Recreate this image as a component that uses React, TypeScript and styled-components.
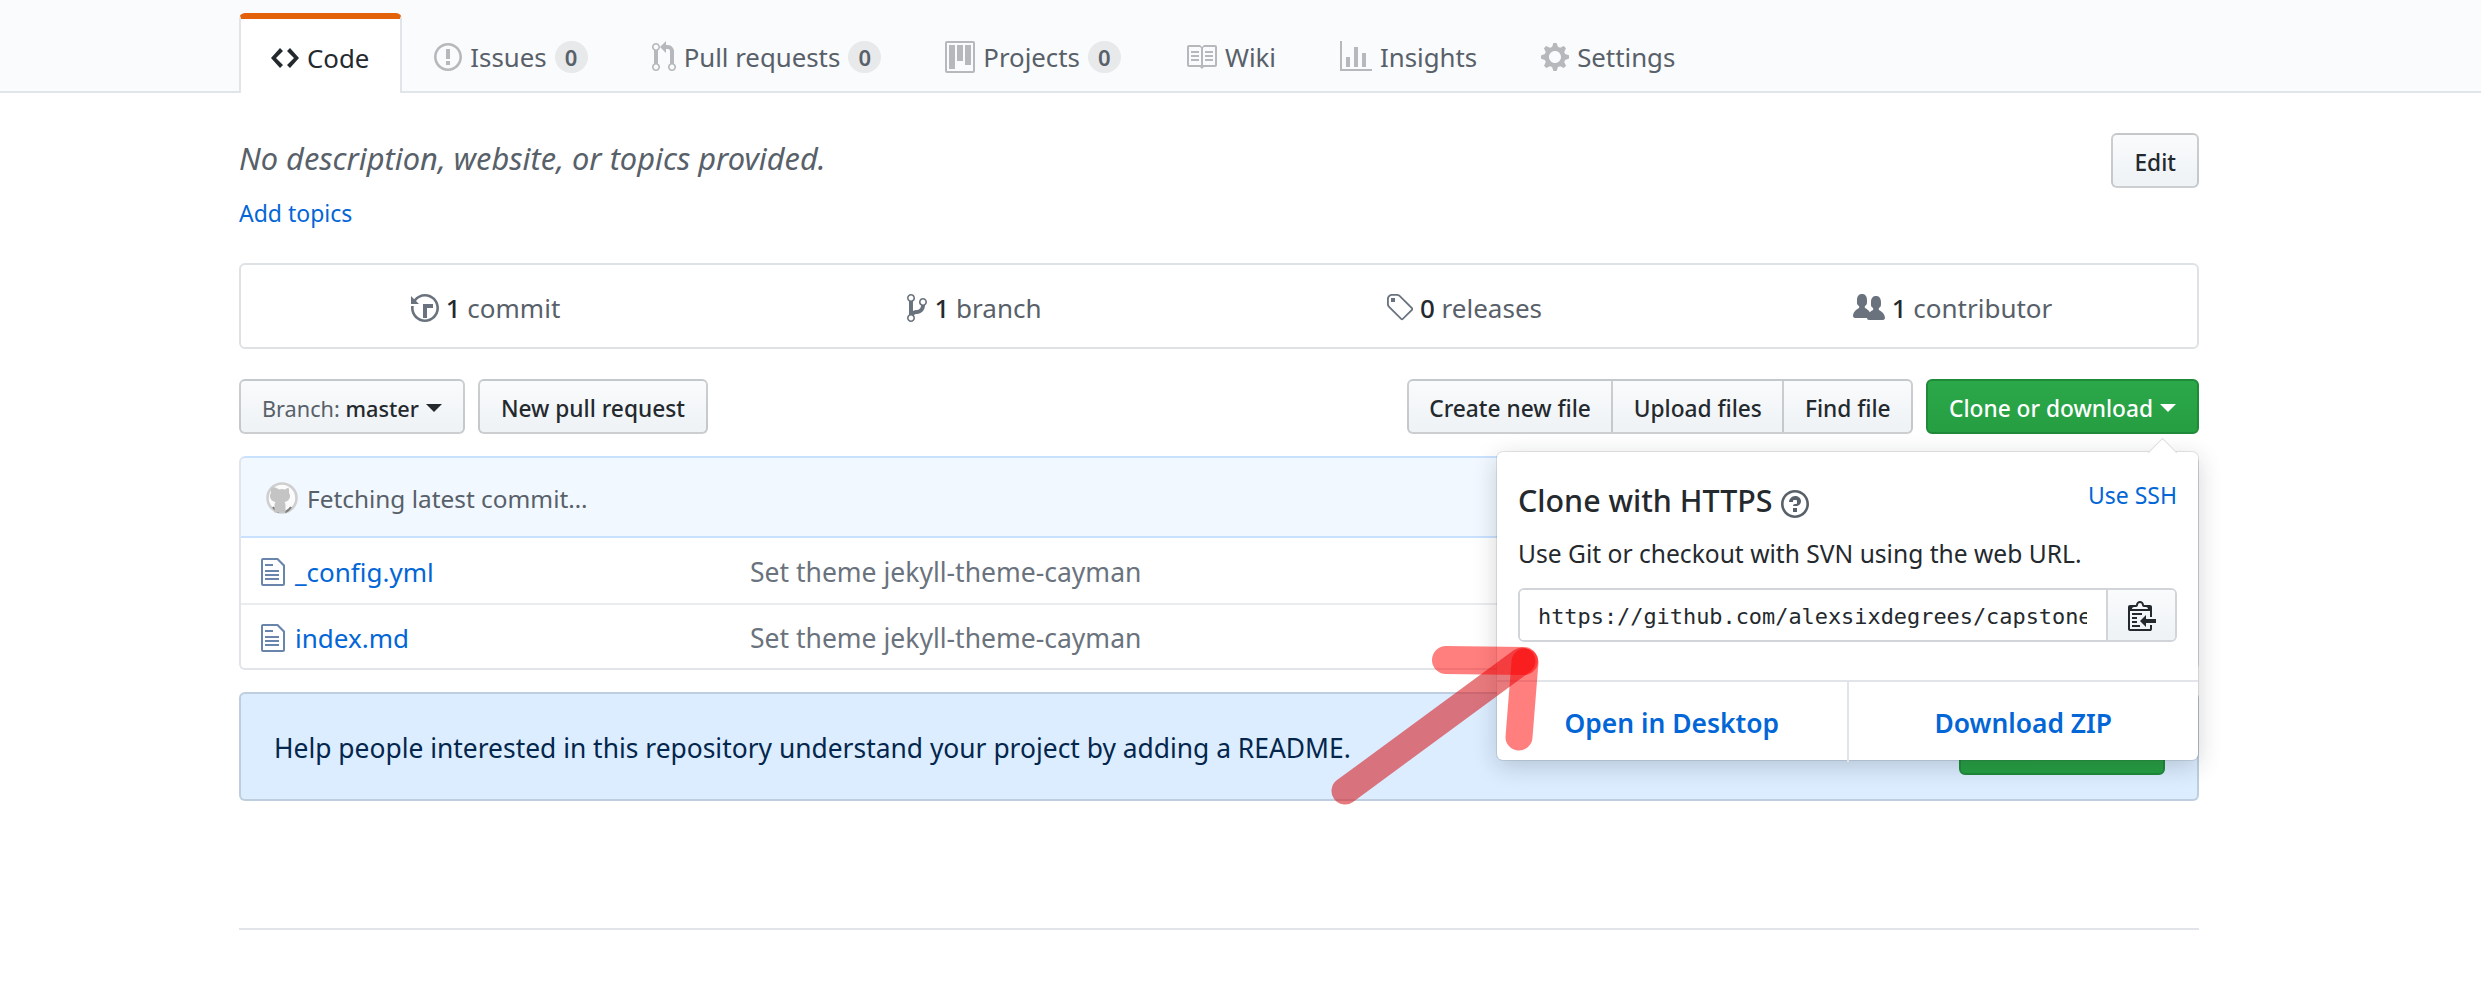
import React from "react";
import styled, { createGlobalStyle } from "styled-components";

const GlobalStyle = createGlobalStyle`
  html, body { margin: 0; padding: 0; background: #fff; }
  body { font-family: "Noto Sans", "Open Sans", sans-serif; color: #24292e; }
  * { box-sizing: border-box; }
`;

const paths = {
  code: "M9.5 3L8 4.5 11.5 8 8 11.5 9.5 13 14 8 9.5 3zm-5 0L0 8l4.5 5L6 11.5 2.5 8 6 4.5 4.5 3z",
  issue: "M7 2.3c3.14 0 5.7 2.56 5.7 5.7s-2.56 5.7-5.7 5.7A5.71 5.71 0 0 1 1.3 8c0-3.14 2.56-5.7 5.7-5.7zM7 1C3.14 1 0 4.14 0 8s3.14 7 7 7 7-3.14 7-7-3.14-7-7-7zm1 3H6v5h2V4zm0 6H6v2h2v-2z",
  pull: "M11 11.28V5c-.03-.78-.34-1.47-.94-2.06C9.46 2.35 8.78 2.03 8 2H7V0L4 3l3 3V4h1c.27.02.48.11.69.31.21.2.3.42.31.69v6.28A1.993 1.993 0 0 0 10 15a1.993 1.993 0 0 0 1-3.72zm-1 2.92c-.66 0-1.2-.55-1.2-1.2 0-.65.55-1.2 1.2-1.2.65 0 1.2.55 1.2 1.2 0 .65-.55 1.2-1.2 1.2zM4 3c0-1.11-.89-2-2-2a1.993 1.993 0 0 0-1 3.72v6.56A1.993 1.993 0 0 0 2 15a1.993 1.993 0 0 0 1-3.72V4.72c.59-.34 1-.98 1-1.72zm-.8 10c0 .66-.55 1.2-1.2 1.2-.65 0-1.2-.55-1.2-1.2 0-.65.55-1.2 1.2-1.2.65 0 1.2.55 1.2 1.2zM2 4.2C1.34 4.2.8 3.65.8 3c0-.65.55-1.2 1.2-1.2.65 0 1.2.55 1.2 1.2 0 .65-.55 1.2-1.2 1.2z",
  project: "M10 12h3V2h-3v10zm-4-2h3V2H6v8zm-4 4h3V2H2v12zm-1 1h13V1H1v14zM14 0H1a1 1 0 0 0-1 1v14a1 1 0 0 0 1 1h13a1 1 0 0 0 1-1V1a1 1 0 0 0-1-1z",
  book: "M3 5h4v1H3V5zm0 3h4V7H3v1zm0 2h4V9H3v1zm11-5h-4v1h4V5zm0 2h-4v1h4V7zm0 2h-4v1h4V9zm2-6v9c0 .55-.45 1-1 1H9.5l-1 1-1-1H2c-.55 0-1-.45-1-1V3c0-.55.45-1 1-1h5.5l1 1 1-1H15c.55 0 1 .45 1 1zm-8 .5L7.5 3H2v9h6V3.5zm7-.5H9.5l-.5.5V12h6V3z",
  graph: "M16 14v1H0V0h1v14h15zM5 13H3V8h2v5zm4 0H7V3h2v10zm4 0h-2V6h2v7z",
  gear: "M14 8.77v-1.6l-1.94-.64-.45-1.09.88-1.84-1.13-1.13-1.81.91-1.09-.45-.69-1.92h-1.6l-.63 1.94-1.11.45-1.84-.88-1.13 1.13.91 1.81-.45 1.09L0 7.23v1.59l1.94.64.45 1.09-.88 1.84 1.13 1.13 1.81-.91 1.09.45.69 1.92h1.59l.63-1.94 1.11-.45 1.84.88 1.13-1.13-.92-1.81.47-1.09L14 8.75v.02zM7 11c-1.66 0-3-1.34-3-3s1.34-3 3-3 3 1.34 3 3-1.34 3-3 3z",
  history: "M8 13H6V6h5v2H8v5zM7 1C4.81 1 2.87 2.02 1.59 3.59L0 2v4h4L2.5 4.5C3.55 3.17 5.17 2.3 7 2.3c3.14 0 5.7 2.56 5.7 5.7s-2.56 5.7-5.7 5.7A5.71 5.71 0 0 1 1.3 8c0-.34.03-.67.09-1H.08C.03 7.33 0 7.66 0 8c0 3.86 3.14 7 7 7s7-3.14 7-7-3.14-7-7-7z",
  branch: "M10 5c0-1.11-.89-2-2-2a1.993 1.993 0 0 0-1 3.72v.3c-.02.52-.23.98-.63 1.38-.4.4-.86.61-1.38.63-.83.02-1.48.16-2 .45V4.72a1.993 1.993 0 0 0-1-3.72C.88 1 0 1.89 0 3a2 2 0 0 0 1 1.72v6.56c-.59.35-1 .99-1 1.72 0 1.11.89 2 2 2 1.11 0 2-.89 2-2 0-.53-.2-1-.53-1.36.09-.06.48-.41.59-.47.25-.11.56-.17.94-.17 1.05-.05 1.95-.45 2.75-1.25S8.95 7.77 9 6.73h-.02C9.59 6.37 10 5.73 10 5zM2 1.8c.66 0 1.2.55 1.2 1.2 0 .65-.55 1.2-1.2 1.2C1.35 4.2.8 3.65.8 3c0-.65.55-1.2 1.2-1.2zm0 12.41c-.66 0-1.2-.55-1.2-1.2 0-.65.55-1.2 1.2-1.2.65 0 1.2.55 1.2 1.2 0 .65-.55 1.2-1.2 1.2zm6-8c-.66 0-1.2-.55-1.2-1.2 0-.65.55-1.2 1.2-1.2.65 0 1.2.55 1.2 1.2 0 .65-.55 1.2-1.2 1.2z",
  tag: "M7.73 1.73C7.26 1.26 6.62 1 5.96 1H3.5C2.13 1 1 2.13 1 3.5v2.47c0 .66.27 1.3.73 1.77l6.06 6.06c.39.39 1.02.39 1.41 0l4.59-4.59a.996.996 0 0 0 0-1.41L7.73 1.73zM2.38 7.09c-.31-.3-.47-.7-.47-1.13V3.5c0-.88.72-1.59 1.59-1.59h2.47c.42 0 .83.16 1.13.47l6.14 6.13-4.73 4.73-6.13-6.15zM3.01 3h2v2H3V3h.01z",
  people: "M16 12.999c0 .439-.45 1-1 1H7.995c-.539 0-.994-.447-.995-.999H1c-.54 0-1-.561-1-1 0-2.634 3-4 3-4s.229-.409 0-1c-.841-.621-1.058-.59-1-3 .058-2.419 1.367-3 2.5-3s2.442.58 2.5 3c.058 2.41-.159 2.379-1 3-.229.59 0 1 0 1s1.549.711 2.42 2.088C9.196 9.369 10 8.999 10 8.999s.229-.409 0-1c-.841-.62-1.058-.59-1-3 .058-2.419 1.367-3 2.5-3s2.437.581 2.495 3c.059 2.41-.158 2.38-1 3-.229.59 0 1 0 1s3.005 1.366 3.005 4z",
  file: "M6 5H2V4h4v1zM2 8h7V7H2v1zm0 2h7V9H2v1zm0 2h7v-1H2v1zm10-7.5V14c0 .55-.45 1-1 1H1c-.55 0-1-.45-1-1V2c0-.55.45-1 1-1h7.5L12 4.5zM11 5L8 2H1v12h10V5z",
  clippy: "M2 13h4v1H2v-1zm5-6H2v1h5V7zm2 3V8l-3 3 3 3v-2h5v-2H9zM4.5 9H2v1h2.5V9zM2 12h2.5v-1H2v1zm9 1h1v2c-.02.28-.11.52-.3.7-.19.18-.42.28-.7.3H1c-.55 0-1-.45-1-1V4c0-.55.45-1 1-1h3c0-1.11.89-2 2-2 1.11 0 2 .89 2 2h3c.55 0 1 .45 1 1v5h-1V6H1v9h10v-2zM2 5h8c0-.55-.45-1-1-1H8c-.55 0-1-.45-1-1s-.45-1-1-1-1 .45-1 1-.45 1-1 1H3c-.55 0-1 .45-1 1z",
  question: "M6 10h2v2H6v-2zm4-3.5C10 8.64 8 9 8 9H6c0-.55.45-1 1-1h.5c.28 0 .5-.22.5-.5v-1c0-.28-.22-.5-.5-.5h-1c-.28 0-.5.22-.5.5V7H4c0-1.5 1.5-3 3-3s3 1 3 2.5zM7 2.3c3.14 0 5.7 2.56 5.7 5.7S10.14 13.7 7 13.7 1.3 11.14 1.3 8 3.86 2.3 7 2.3zM7 1C3.14 1 0 4.14 0 8s3.14 7 7 7 7-3.14 7-7-3.14-7-7-7z",
};

type IconName = keyof typeof paths;

const widths: Record<IconName, number> = {
  code: 14, issue: 14, pull: 12, project: 15, book: 16, graph: 16, gear: 14,
  history: 14, branch: 10, tag: 14, people: 16, file: 12, clippy: 14, question: 14,
};

const Octicon = ({ name, className }: { name: IconName; className?: string }) => (
  <svg
    className={className}
    width={widths[name] * 2}
    height={32}
    viewBox={`0 0 ${widths[name]} 16`}
    fill="currentColor"
  >
    <path fillRule="evenodd" d={paths[name]} />
  </svg>
);

// the loading placeholder avatar: a pale ring around a grey octocat
const LoaderAvatar = () => (
  <AvatarSvg width="32" height="32" viewBox="0 0 32 32">
    <circle cx="16" cy="16" r="14.5" fill="#fbfbfb" stroke="#cfcfcf" strokeWidth="2.6" />
    <path d="M7 25 A14.5 14.5 0 0 0 13 30.2" fill="none" stroke="#7d7d7d" strokeWidth="2.2" />
    <path d="M25 25 A14.5 14.5 0 0 1 19 30.2" fill="none" stroke="#7d7d7d" strokeWidth="2.2" />
    <path
      d="M9.500 5.500l3.600 2q2.900-.8 5.800 0l3.600-2q.9 2.800.4 5.200q1.500 2 1 4.600q-1 4.200-5.400 4.700q1 1 1 3v7.500h-11V23q0-2 1-3q-4.400-.5-5.400-4.700q-.5-2.600 1-4.600q-.5-2.400.4-5.200z"
      fill="#c4c4c4"
    />
  </AvatarSvg>
);

const tabs: { icon: IconName; label: string; count?: number }[] = [
  { icon: "code", label: "Code" },
  { icon: "issue", label: "Issues", count: 0 },
  { icon: "pull", label: "Pull requests", count: 0 },
  { icon: "project", label: "Projects", count: 0 },
  { icon: "book", label: "Wiki" },
  { icon: "graph", label: "Insights" },
  { icon: "gear", label: "Settings" },
];

const stats: { icon: IconName; value: string; label: string }[] = [
  { icon: "history", value: "1", label: "commit" },
  { icon: "branch", value: "1", label: "branch" },
  { icon: "tag", value: "0", label: "releases" },
  { icon: "people", value: "1", label: "contributor" },
];

const files = ["_config.yml", "index.md"];

const App = () => {
  return (
    <Page>
      <GlobalStyle />
      <TabBar>
        <TabList>
          {tabs.map((tab, i) => (
            <Tab key={tab.label} $active={i === 0}>
              <TabIcon name={tab.icon} $active={i === 0} />
              {tab.label}
              {tab.count !== undefined && <Counter>{tab.count}</Counter>}
            </Tab>
          ))}
        </TabList>
      </TabBar>

      <Main>
        <MetaRow>
          <div>
            <Description>No description, website, or topics provided.</Description>
            <TopicsLink>Add topics</TopicsLink>
          </div>
          <Button>Edit</Button>
        </MetaRow>

        <StatsBox>
          {stats.map((stat) => (
            <Stat key={stat.label}>
              <StatIcon name={stat.icon} />
              <span>
                <strong>{stat.value}</strong> {stat.label}
              </span>
            </Stat>
          ))}
        </StatsBox>

        <Toolbar>
          <ButtonRow>
            <Button>
              <BranchText>
                <BranchLabel>Branch:</BranchLabel> master
              </BranchText>
              <Caret />
            </Button>
            <Button>New pull request</Button>
          </ButtonRow>
          <ButtonRow>
            <ButtonGroup>
              <GroupButton>Create new file</GroupButton>
              <GroupButton>Upload files</GroupButton>
              <GroupButton>Find file</GroupButton>
            </ButtonGroup>
            <GreenButton>
              Clone or download
              <Caret />
            </GreenButton>
          </ButtonRow>

          <ClonePopup>
            <PopupBody>
              <PopupHead>
                <PopupTitle>
                  Clone with HTTPS <HelpIcon name="question" />
                </PopupTitle>
                <SshLink>Use SSH</SshLink>
              </PopupHead>
              <PopupText>Use Git or checkout with SVN using the web URL.</PopupText>
              <UrlGroup>
                <UrlInput readOnly value="https://github.com/alexsixdegrees/capstone.git" />
                <CopyButton>
                  <Octicon name="clippy" />
                </CopyButton>
              </UrlGroup>
            </PopupBody>
            <PopupFooter>
              <PopupAction>Open in Desktop</PopupAction>
              <PopupAction>Download ZIP</PopupAction>
            </PopupFooter>
          </ClonePopup>
        </Toolbar>

        <FileTable>
          <CommitRow>
            <LoaderAvatar />
            Fetching latest commit…
          </CommitRow>
          {files.map((name) => (
            <FileRow key={name}>
              <FileIcon name="file" />
              <FileName>{name}</FileName>
              <CommitMessage>Set theme jekyll-theme-cayman</CommitMessage>
            </FileRow>
          ))}
        </FileTable>

        <ReadmeFlash>
          Help people interested in this repository understand your project by adding a README.
          <GreenButton>Add a README</GreenButton>
        </ReadmeFlash>

        <FooterRule />
      </Main>

      <ArrowOverlay width="240" height="180" viewBox="0 0 240 180">
        <line x1="25" y1="151" x2="202" y2="21" stroke="rgb(214,34,38)" strokeOpacity="0.6" strokeWidth="27" strokeLinecap="round" />
        <line x1="126" y1="20" x2="204" y2="21" stroke="#ff0000" strokeOpacity="0.5" strokeWidth="28" strokeLinecap="round" />
        <line x1="199" y1="97" x2="205" y2="22" stroke="#ff0000" strokeOpacity="0.5" strokeWidth="27" strokeLinecap="round" />
      </ArrowOverlay>
    </Page>
  );
};

export default App;

const Page = styled.div`
  position: relative;
  width: 2481px;
  height: 994px;
  overflow: hidden;
  background: #fff;
`;

const TabBar = styled.nav`
  height: 93px;
  padding-left: 239px;
  background: #fafbfc;
  border-bottom: 2px solid #e1e4e8;
`;

const TabList = styled.div`
  display: flex;
  align-items: flex-end;
  height: 93px;
`;

const Tab = styled.div<{ $active?: boolean }>`
  display: flex;
  align-items: center;
  gap: 8px;
  height: ${(p) => (p.$active ? "80px" : "72px")};
  padding: 0 ${(p) => (p.$active ? "31px" : "32px")};
  font-size: 25.8px;
  color: ${(p) => (p.$active ? "#24292e" : "#586069")};
  ${(p) =>
    p.$active &&
    `
    padding-left: 30px;
    padding-top: 3px;
    background: #fff;
    border: 2px solid #e1e4e8;
    border-top: 6px solid #e36209;
    border-bottom: 0;
    border-radius: 6px 6px 0 0;
  `}
`;

const TabIcon = styled(Octicon)<{ $active?: boolean }>`
  flex: none;
  color: ${(p) => (p.$active ? "#24292e" : "rgba(27, 31, 35, 0.3)")};
`;

const Counter = styled.span`
  display: inline-flex;
  align-items: center;
  justify-content: center;
  width: 33px;
  height: 32px;
  border-radius: 16px;
  background: rgba(27, 31, 35, 0.08);
  color: #586069;
  font-size: 22px;
  font-weight: 600;
`;

const Main = styled.main`
  width: 1960px;
  margin-left: 239px;
`;

const MetaRow = styled.section`
  display: flex;
  justify-content: space-between;
  align-items: flex-start;
  padding-top: 40px;
`;

const Description = styled.div`
  height: 54px;
  font-size: 30.8px;
  line-height: 50px;
  font-style: italic;
  color: #586069;
`;

const TopicsLink = styled.a`
  display: block;
  margin-top: 9px;
  font-size: 23px;
  line-height: 34px;
  color: #0366d6;
`;

const Button = styled.div`
  display: inline-flex;
  align-items: center;
  height: 55px;
  padding: 3px 21px 0;
  border: 2px solid rgba(27, 31, 35, 0.2);
  border-radius: 6px;
  background: linear-gradient(-180deg, #fafbfc, #eff3f6 90%);
  font-size: 22.7px;
  font-weight: 500;
  color: #24292e;
  white-space: pre;
`;

const StatsBox = styled.section`
  display: grid;
  grid-template-columns: repeat(4, 1fr);
  align-items: center;
  height: 86px;
  margin-top: 33px;
  padding-top: 4px;
  border: 2px solid #dfe2e5;
  border-radius: 6px;
`;

const Stat = styled.div`
  display: flex;
  align-items: center;
  justify-content: center;
  font-size: 26px;
  color: #586069;
  white-space: pre;

  strong {
    font-weight: 500;
    color: #24292e;
  }
`;

const StatIcon = styled(Octicon)`
  flex: none;
  margin-right: 7px;
  color: #6a737d;
`;

const Toolbar = styled.section`
  position: relative;
  display: flex;
  justify-content: space-between;
  margin-top: 30px;
`;

const ButtonRow = styled.div`
  display: flex;
  gap: 13px;
`;

const BranchText = styled.span`
  font-size: 21.7px;
`;

const BranchLabel = styled.span`
  font-weight: 400;
  color: #586069;
`;

const Caret = styled.span`
  display: inline-block;
  width: 0;
  height: 0;
  margin-left: 7px;
  border-style: solid;
  border-width: 8px 8px 0;
  border-color: currentColor transparent transparent;
`;

const ButtonGroup = styled.div`
  display: flex;
  height: 55px;
  border: 2px solid rgba(27, 31, 35, 0.2);
  border-radius: 6px;
  background: linear-gradient(-180deg, #fafbfc, #eff3f6 90%);
`;

const GroupButton = styled.div`
  display: flex;
  align-items: center;
  padding: 3px 20.5px 0;
  font-size: 22.7px;
  font-weight: 500;

  & + & {
    border-left: 2px solid rgba(27, 31, 35, 0.2);
  }
`;

const GreenButton = styled.div`
  display: inline-flex;
  align-items: center;
  height: 55px;
  padding: 3px 21px 0;
  border: 2px solid #1f8a3a;
  border-radius: 6px;
  background: linear-gradient(-180deg, #2ba84a, #269f42 90%);
  color: #fff;
  font-size: 22.7px;
  font-weight: 500;
  white-space: pre;
`;

const ClonePopup = styled.div`
  position: absolute;
  top: 73px;
  right: 1px;
  z-index: 2;
  width: 701px;
  height: 308px;
  background: #fff;
  border-radius: 6px;
  box-shadow: 0 0 0 1px rgba(27, 31, 35, 0.1), 0 6px 24px rgba(27, 31, 35, 0.2);

  &::before {
    content: "";
    position: absolute;
    top: -11px;
    right: 24px;
    width: 22px;
    height: 22px;
    background: #fff;
    transform: rotate(45deg) scale(0.9);
    border-top: 1px solid rgba(27, 31, 35, 0.15);
    border-left: 1px solid rgba(27, 31, 35, 0.15);
  }
`;

const PopupBody = styled.div`
  position: relative;
  padding: 29px 21px 0;
`;

const PopupHead = styled.div`
  display: flex;
  justify-content: space-between;
  align-items: flex-start;
`;

const PopupTitle = styled.h3`
  display: flex;
  align-items: center;
  gap: 8px;
  margin: 0;
  font-size: 30.4px;
  line-height: 38px;
  font-weight: 500;
`;

const HelpIcon = styled(Octicon)`
  margin-top: 7px;
  color: #586069;
`;

const SshLink = styled.a`
  margin-top: -1px;
  font-size: 23px;
  line-height: 30px;
  color: #0366d6;
`;

const PopupText = styled.p`
  margin: 19px 0 0;
  font-size: 24.6px;
  line-height: 30px;
  color: #24292e;
`;

const UrlGroup = styled.div`
  display: flex;
  height: 54px;
  margin-top: 19px;
  border: 2px solid #d1d5da;
  border-radius: 6px;
  overflow: hidden;
`;

const UrlInput = styled.input`
  flex: 1;
  min-width: 0;
  padding: 2px 19px 0 18px;
  border: 0;
  outline: 0;
  font-family: "DejaVu Sans Mono", monospace;
  font-size: 21.9px;
  color: #24292e;
  background: #fff;
`;

const CopyButton = styled.div`
  display: flex;
  align-items: center;
  justify-content: center;
  width: 69px;
  border-left: 2px solid #d1d5da;
  background: linear-gradient(-180deg, #fafbfc, #eff3f6 90%);
  color: #24292e;
`;

const PopupFooter = styled.div`
  display: flex;
  height: 82px;
  margin-top: 38px;
  border-top: 2px solid #e1e4e8;
`;

const PopupAction = styled.div`
  flex: 1;
  display: flex;
  align-items: center;
  justify-content: center;
  padding-top: 2px;
  font-size: 26.4px;
  font-weight: 600;
  color: #0366d6;

  & + & {
    border-left: 2px solid #e1e4e8;
  }
`;

const FileTable = styled.section`
  margin-top: 22px;
  border: 2px solid #e1e4e8;
  border-top: 0;
  border-radius: 6px;
  overflow: hidden;
`;

const CommitRow = styled.div`
  display: flex;
  align-items: center;
  gap: 9px;
  height: 82px;
  margin: 0 -2px;
  padding: 2px 0 0 25px;
  background: #f1f8ff;
  border: 2px solid #c8e1ff;
  border-radius: 6px 6px 0 0;
  font-size: 24.4px;
  color: #586069;
`;

const AvatarSvg = styled.svg`
  flex: none;
`;

const FileRow = styled.div`
  display: flex;
  align-items: center;
  height: 65px;
  padding: 3px 0 0 20px;

  & + & {
    border-top: 2px solid #eaecef;
  }
`;

const FileIcon = styled(Octicon)`
  flex: none;
  color: #6a85ab;
`;

const FileName = styled.a`
  width: 455px;
  margin-left: 10px;
  font-size: 26px;
  color: #0366d6;
`;

const CommitMessage = styled.span`
  font-size: 26.5px;
  color: #6a737d;
`;

const ReadmeFlash = styled.section`
  display: flex;
  align-items: center;
  justify-content: space-between;
  height: 109px;
  margin-top: 22px;
  padding: 2px 32px 0 33px;
  background: #dbedff;
  border: 2px solid rgba(27, 31, 35, 0.15);
  border-radius: 6px;
  font-size: 26.4px;
  color: #05264c;
`;

const FooterRule = styled.hr`
  height: 2px;
  margin: 127px 0 0;
  border: 0;
  background: #e1e4e8;
`;

const ArrowOverlay = styled.svg`
  position: absolute;
  left: 1320px;
  top: 640px;
  z-index: 3;
`;
